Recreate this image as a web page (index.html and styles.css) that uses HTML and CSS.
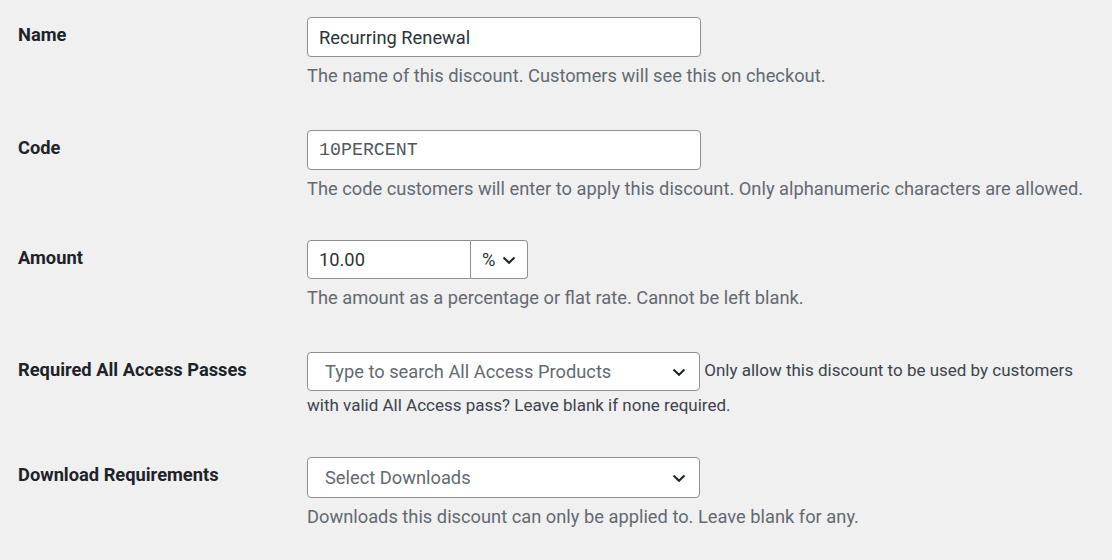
FILE: index.html
```html
<!DOCTYPE html>
<html lang="en">
<head>
    <meta charset="UTF-8">
    <meta name="viewport" content="width=device-width, initial-scale=1.0">
    <title>Edit Discount</title>
    <link rel="stylesheet" href="styles.css">
</head>
<body>
    <div class="form-table">
        <div class="form-row row-name">
            <label class="row-label" for="name">Name</label>
            <div class="row-field">
                <input class="text-input" type="text" id="name" value="Recurring Renewal">
                <p class="description">The name of this discount. Customers will see this on checkout.</p>
            </div>
        </div>

        <div class="form-row row-code">
            <label class="row-label" for="code">Code</label>
            <div class="row-field">
                <input class="text-input code" type="text" id="code" value="10PERCENT">
                <p class="description">The code customers will enter to apply this discount. Only alphanumeric characters are allowed.</p>
            </div>
        </div>

        <div class="form-row row-amount">
            <label class="row-label" for="amount">Amount</label>
            <div class="row-field">
                <div class="amount-group">
                    <input class="text-input amount" type="text" id="amount" value="10.00">
                    <div class="amount-type">
                        <span>%</span>
                        <svg class="chevron" width="16" height="16" viewBox="0 0 16 16"><path d="M2.5 5.5 8 10.8l5.5-5.3" fill="none" stroke="#1d2327" stroke-width="2"/></svg>
                    </div>
                </div>
                <p class="description">The amount as a percentage or flat rate. Cannot be left blank.</p>
            </div>
        </div>

        <div class="form-row row-passes">
            <label class="row-label" for="passes">Required All Access Passes</label>
            <div class="row-field inline-text">
                <div class="select-box" id="passes">
                    <span class="placeholder">Type to search All Access Products</span>
                    <svg class="chevron" width="16" height="16" viewBox="0 0 16 16"><path d="M2.5 5.5 8 10.8l5.5-5.3" fill="none" stroke="#1d2327" stroke-width="2"/></svg>
                </div>
                <span class="inline-note">Only allow this discount to be used by customers with valid All Access pass? Leave blank if none required.</span>
            </div>
        </div>

        <div class="form-row row-downloads">
            <label class="row-label" for="downloads">Download Requirements</label>
            <div class="row-field">
                <div class="select-box tall" id="downloads">
                    <span class="placeholder">Select Downloads</span>
                    <svg class="chevron" width="16" height="16" viewBox="0 0 16 16"><path d="M2.5 5.5 8 10.8l5.5-5.3" fill="none" stroke="#1d2327" stroke-width="2"/></svg>
                </div>
                <p class="description">Downloads this discount can only be applied to. Leave blank for any.</p>
            </div>
        </div>
    </div>
</body>
</html>
```

FILE: styles.css
```css
body {
    background-color: #f0f0f1; /* WP admin grey */
    color: #3c434a;
    font-family: Roboto, "Noto Sans", sans-serif;
    font-size: 18.3px;
    line-height: 26px;
    margin: 0;
    padding: 17px 18px 0 18px;
}
.form-row {
    display: grid;
    grid-template-columns: 289px 1fr;
}
.row-name { margin-bottom: 41px; }
.row-code { margin-bottom: 38px; }
.row-amount { margin-bottom: 41px; }
.row-passes { margin-bottom: 38px; }
.row-label {
    color: #1d2327;
    font-weight: 700;
    padding-top: 5px;
}
.text-input {
    width: 394px;
    height: 40px;
    box-sizing: border-box;
    border: 1px solid #8c8f94;
    border-radius: 4px;
    background: #fff;
    color: #2c3338;
    font-family: inherit;
    font-size: 18.3px;
    padding: 0 11px;
    margin: 0;
    display: block;
}
.text-input.code {
    font-family: "Liberation Mono", monospace;
    color: #50575e;
}
.amount-group {
    display: flex;
    width: 221px;
    height: 39px;
}
.text-input.amount {
    width: 164px;
    height: 39px;
    border-radius: 4px 0 0 4px;
}
.amount-type {
    width: 57px;
    box-sizing: border-box;
    border: 1px solid #8c8f94;
    border-left: none;
    border-radius: 0 4px 4px 0;
    background: #fff;
    color: #2c3338;
    display: flex;
    align-items: center;
    gap: 6px;
    padding-left: 11px;
}
.description {
    color: #646970;
    margin: 6px 0 0 0;
}
.select-box {
    width: 393px;
    height: 39px;
    box-sizing: border-box;
    border: 1px solid #8c8f94;
    border-radius: 4px;
    background: #fff;
    display: flex;
    align-items: center;
    justify-content: space-between;
    padding: 0 12px 0 17px;
}
.select-box.tall {
    height: 41px;
}
.select-box .placeholder {
    color: #646970;
}
.inline-text {
    color: #3c434a;
    font-size: 17px;
    line-height: 28px;
}
.inline-text .select-box {
    display: inline-flex;
    vertical-align: middle;
    font-size: 18.3px;
}
.chevron {
    display: block;
}
```
